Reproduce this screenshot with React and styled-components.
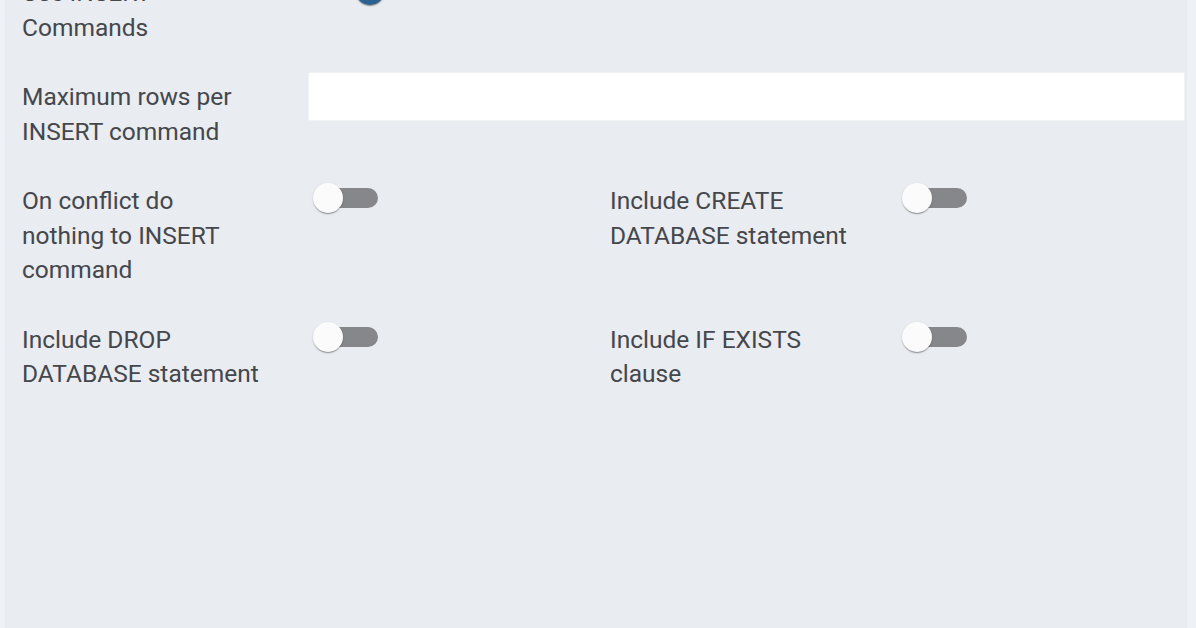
import React, { useState } from "react";
import styled, { createGlobalStyle } from "styled-components";

const GlobalStyle = createGlobalStyle`
	html, body {
		margin: 0;
		padding: 0;
		background: #eef1f6;
		height: 100%;
		overflow: hidden;
	}
	#root {
		height: 100%;
	}
`;

const Page = styled.div`
	height: 100%;
	margin: 0 9px 0 5px;
	background: #e9ecf1;
	overflow: hidden;
`;

// page is scrolled a little, so the first row is partly hidden
const Form = styled.div`
	margin-top: -32px;
	padding: 0 2px 0 17px;
	display: grid;
	grid-template-columns: 286px 302px 287px 1fr;
	row-gap: 19px;
	align-items: start;
	font-family: Roboto, "Liberation Sans", sans-serif;
	font-size: 24.5px;
	line-height: 34.5px;
	color: #45474b;
`;

const Label = styled.div`
	padding: 8px 0;
`;

const Line = styled.span`
	display: block;
	white-space: nowrap;
`;

const Control = styled.div`
	grid-column: ${(props) => (props.wide ? "2 / -1" : "auto")};
`;

const TextInput = styled.input`
	display: block;
	box-sizing: border-box;
	width: 100%;
	height: 49px;
	margin: 0;
	border: 1px solid #f1f2f4;
	border-radius: 2px;
	background: #ffffff;
	outline: none;
	font: inherit;
	padding: 0 12px;
`;

const SwitchRoot = styled.span`
	position: relative;
	display: block;
	width: 80px;
	height: 30px;
	margin-top: 7px;
	cursor: pointer;
`;

const Track = styled.span`
	position: absolute;
	left: 10px;
	top: 5px;
	width: 60px;
	height: 20px;
	border-radius: 10px;
	background: ${(props) => (props.on ? "#6e92b4" : "#86878a")};
`;

const Thumb = styled.span`
	position: absolute;
	top: 0;
	left: ${(props) => (props.on ? "47px" : "5px")};
	width: 30px;
	height: 30px;
	border-radius: 50%;
	background: ${(props) => (props.on ? "#2c6291" : "#fbfbfb")};
	box-shadow: 0 2px 1px -1px rgba(0, 0, 0, 0.2), 0 1px 1px 0 rgba(0, 0, 0, 0.14),
		0 1px 3px 0 rgba(0, 0, 0, 0.12);
`;

const Switch = ({ value }) => {
	const [on, setOn] = useState(value);
	return (
		<SwitchRoot onClick={() => setOn(!on)}>
			<Track on={on ? 1 : 0} />
			<Thumb on={on ? 1 : 0} />
		</SwitchRoot>
	);
};

const Field = ({ lines, children, wide }) => (
	<>
		<Label>
			{lines.map((l) => (
				<Line key={l}>{l}</Line>
			))}
		</Label>
		<Control wide={wide ? 1 : 0}>{children}</Control>
	</>
);

const App = () => {
	return (
		<>
			<GlobalStyle />
			<Page>
				<Form>
					<Field lines={["Use INSERT", "Commands"]}>
						<Switch value={true} />
					</Field>
					<div />
					<div />

					<Field lines={["Maximum rows per", "INSERT command"]} wide>
						<TextInput />
					</Field>

					<Field lines={["On conflict do", "nothing to INSERT", "command"]}>
						<Switch value={false} />
					</Field>
					<Field lines={["Include CREATE", "DATABASE statement"]}>
						<Switch value={false} />
					</Field>

					<Field lines={["Include DROP", "DATABASE statement"]}>
						<Switch value={false} />
					</Field>
					<Field lines={["Include IF EXISTS", "clause"]}>
						<Switch value={false} />
					</Field>
				</Form>
			</Page>
		</>
	);
};

export default App;
